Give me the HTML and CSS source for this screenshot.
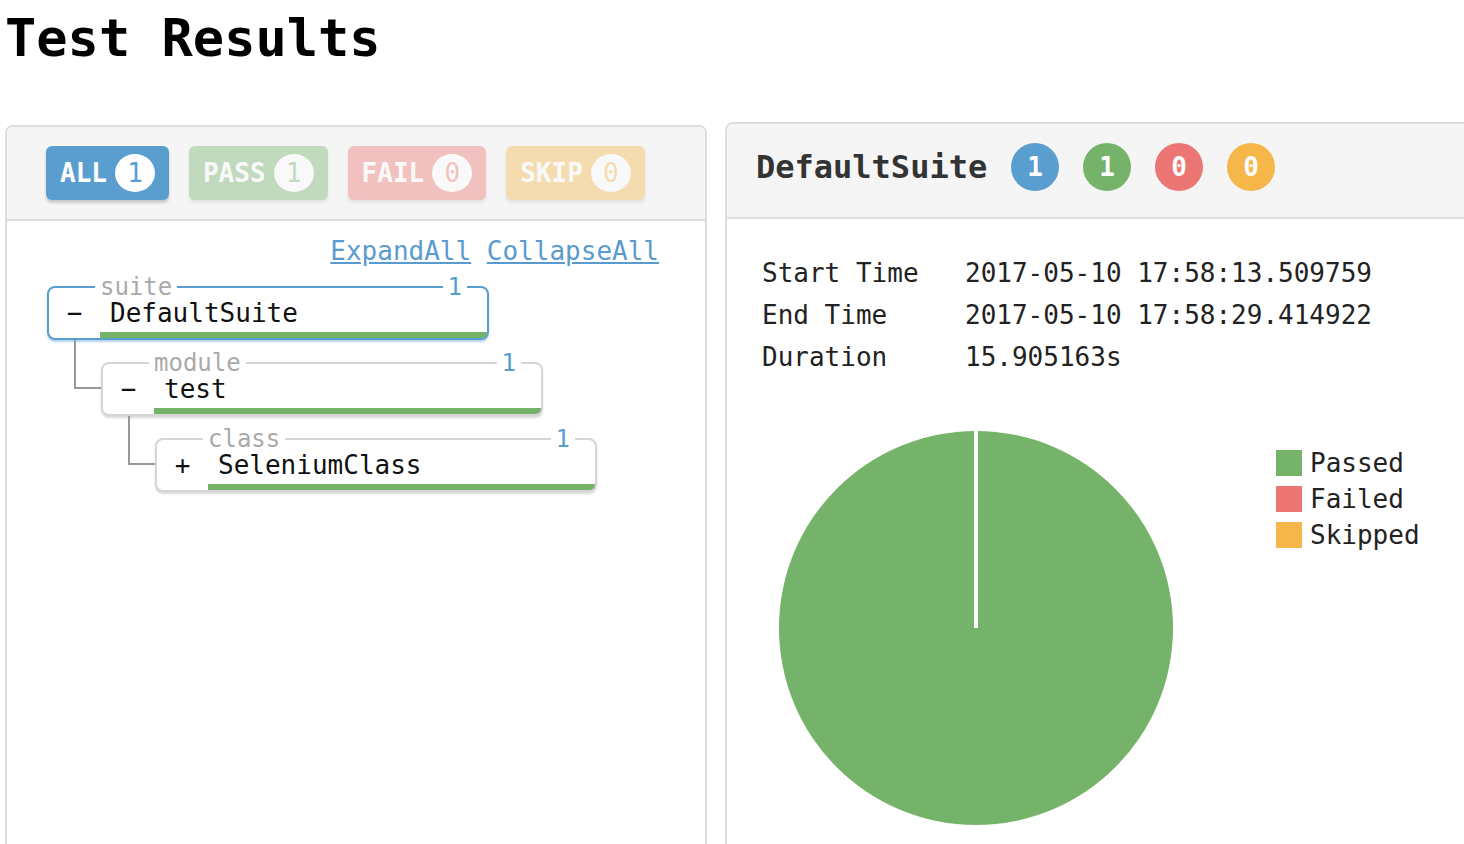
FILE: index.html
```html
<!DOCTYPE html>
<html lang="en">
<head>
<meta charset="utf-8">
<title>Test Results</title>
<link rel="stylesheet" href="styles.css">
</head>
<body>
<h1 class="page-title">Test Results</h1>
<div class="layout">
  <section class="panel panel-left">
    <div class="panel-heading filters">
      <div class="filter filter-all">ALL<span class="filter-badge">1</span></div>
      <div class="filter filter-pass is-off">PASS<span class="filter-badge">1</span></div>
      <div class="filter filter-fail is-off">FAIL<span class="filter-badge">0</span></div>
      <div class="filter filter-skip is-off">SKIP<span class="filter-badge">0</span></div>
    </div>
    <div class="tree-body">
      <div class="tree-actions"><a href="#">ExpandAll</a> <a href="#">CollapseAll</a></div>
      <div class="tree">
        <div class="node">
          <div class="node-box is-selected">
            <span class="node-kind">suite</span><span class="node-count">1</span>
            <span class="node-toggle">−</span>
            <div class="node-main"><div class="node-name">DefaultSuite</div><div class="node-bar"></div></div>
          </div>
          <div class="node-children">
            <div class="node child">
              <div class="node-box">
                <span class="node-kind">module</span><span class="node-count">1</span>
                <span class="node-toggle">−</span>
                <div class="node-main"><div class="node-name">test</div><div class="node-bar"></div></div>
              </div>
              <div class="node-children">
                <div class="node child">
                  <div class="node-box">
                    <span class="node-kind">class</span><span class="node-count">1</span>
                    <span class="node-toggle">+</span>
                    <div class="node-main"><div class="node-name">SeleniumClass</div><div class="node-bar"></div></div>
                  </div>
                </div>
              </div>
            </div>
          </div>
        </div>
      </div>
    </div>
  </section>
  <section class="panel panel-right">
    <div class="panel-heading suite-heading">
      <h2 class="suite-title">DefaultSuite</h2>
      <span class="count count-all">1</span>
      <span class="count count-pass">1</span>
      <span class="count count-fail">0</span>
      <span class="count count-skip">0</span>
    </div>
    <div class="summary">
      <div class="info">
        <span>Start Time</span><span>2017-05-10 17:58:13.509759</span>
        <span>End Time</span><span>2017-05-10 17:58:29.414922</span>
        <span>Duration</span><span>15.905163s</span>
      </div>
      <div class="chart">
        <svg class="pie" width="398" height="398" viewBox="0 0 398 398">
          <circle cx="199" cy="199" r="197" fill="#76b36a"/>
          <line x1="199" y1="199" x2="199" y2="0" stroke="#fff" stroke-width="4"/>
        </svg>
        <div class="legend">
          <div class="legend-item"><span class="swatch swatch-pass"></span>Passed</div>
          <div class="legend-item"><span class="swatch swatch-fail"></span>Failed</div>
          <div class="legend-item"><span class="swatch swatch-skip"></span>Skipped</div>
        </div>
      </div>
    </div>
  </section>
</div>
</body>
</html>
```
FILE: styles.css
```css
html, body {
  margin: 0;
  background: #fff;
}
body {
  font-family: "DejaVu Sans Mono", "Liberation Mono", monospace;
  color: #222;
  overflow-x: hidden;
}
.page-title {
  margin: 8px 0 0 5px;
  font-size: 52px;
  line-height: 60px;
  font-weight: bold;
  color: #000;
}
.layout {
  display: grid;
  grid-template-columns: 702px 760px;
  column-gap: 18px;
  padding-left: 5px;
  margin-top: 54px;
  align-items: start;
}
.panel {
  border: 2px solid #ddd;
  border-radius: 8px;
  background: #fff;
  box-sizing: border-box;
  min-height: 760px;
}
.panel-left {
  margin-top: 3px;
}
.panel-heading {
  background: #f5f5f5;
  border-bottom: 2px solid #ddd;
  border-radius: 6px 6px 0 0;
}
.filters {
  display: flex;
  gap: 20px;
  padding: 19px 39px 19px;
}
.filter {
  display: flex;
  align-items: center;
  height: 54px;
  padding: 0 14px;
  border-radius: 6px;
  color: #fff;
  font-weight: bold;
  font-size: 26px;
  box-shadow: 0 3px 3px rgba(0, 0, 0, 0.18);
}
.filter-badge {
  margin-left: 8px;
  width: 40px;
  height: 38px;
  border-radius: 50%;
  background: #fff;
  display: flex;
  align-items: center;
  justify-content: center;
  font-weight: normal;
  font-size: 26px;
}
.filter.is-off { opacity: 0.4; }
.filter-all { background: #5a9ed0; }
.filter-all .filter-badge { color: #5a9ed0; }
.filter-pass { background: #76b36a; }
.filter-pass .filter-badge { color: #76b36a; }
.filter-fail { background: #ec7673; }
.filter-fail .filter-badge { color: #ec7673; }
.filter-skip { background: #f5b74a; }
.filter-skip .filter-badge { color: #f5b74a; }

.tree-body {
  padding: 12px 46px 0 40px;
}
.tree-actions {
  text-align: right;
  font-size: 26px;
  line-height: 36px;
}
.tree-actions a {
  color: #5a9bcf;
  text-decoration: underline;
}
.tree {
  margin-top: 17px;
}
.node-box {
  position: relative;
  display: flex;
  width: 442px;
  box-sizing: border-box;
  border: 2px solid #d6d6d6;
  border-radius: 8px;
  box-shadow: 0 2px 2px rgba(0, 0, 0, 0.15);
  background: #fff;
  font-size: 26px;
  color: #111;
}
.node-box.is-selected {
  border-color: #5a9ed0;
  box-shadow: 0 2px 2px rgba(90, 158, 208, 0.45);
}
.node-kind,
.node-count {
  position: absolute;
  top: -11px;
  padding: 0 5px;
  background: #fff;
  font-size: 24px;
  line-height: 20px;
}
.node-kind {
  left: 46px;
  color: #aaa;
}
.node-count {
  right: 20px;
  color: #5a9ed0;
}
.node-toggle {
  width: 51px;
  flex: none;
  text-align: center;
  padding-top: 11px;
  line-height: 28px;
}
.node-main {
  flex: 1;
  padding-top: 11px;
  display: flex;
  flex-direction: column;
}
.node-name {
  padding-left: 10px;
  line-height: 28px;
  height: 28px;
}
.node-bar {
  height: 6px;
  margin-top: 5px;
  background: #76b36a;
  border-bottom-right-radius: 5px;
}
.node-children {
  margin-left: 54px;
}
.node.child {
  position: relative;
  margin-top: 22px;
}
.node.child::before {
  content: "";
  position: absolute;
  left: -27px;
  top: -22px;
  width: 27px;
  height: 49px;
  box-sizing: border-box;
  border-left: 2px solid #999;
  border-bottom: 2px solid #999;
}

.suite-heading {
  display: flex;
  align-items: center;
  gap: 24px;
  padding: 19px 29px 26px;
}
.suite-title {
  margin: 0;
  font-size: 32px;
  line-height: 48px;
  font-weight: bold;
  color: #333;
}
.count {
  width: 48px;
  height: 48px;
  border-radius: 50%;
  color: #fff;
  font-weight: bold;
  font-size: 26px;
  display: flex;
  align-items: center;
  justify-content: center;
}
.count-all { background: #5a9ed0; }
.count-pass { background: #76b36a; }
.count-fail { background: #ec7673; }
.count-skip { background: #f5b74a; }

.summary {
  padding: 33px 35px 0;
}
.info {
  display: grid;
  grid-template-columns: 203px auto;
  font-size: 26px;
  line-height: 42px;
  color: #222;
}
.chart {
  display: flex;
  align-items: flex-start;
  margin-top: 51px;
  padding-left: 15px;
}
.pie {
  display: block;
  flex: none;
}
.legend {
  margin-left: 101px;
  margin-top: 16px;
}
.legend-item {
  display: flex;
  align-items: center;
  gap: 8px;
  height: 36px;
  font-size: 26px;
  color: #222;
}
.swatch {
  width: 26px;
  height: 26px;
  flex: none;
}
.swatch-pass { background: #76b36a; }
.swatch-fail { background: #ec7673; }
.swatch-skip { background: #f5b74a; }
```
